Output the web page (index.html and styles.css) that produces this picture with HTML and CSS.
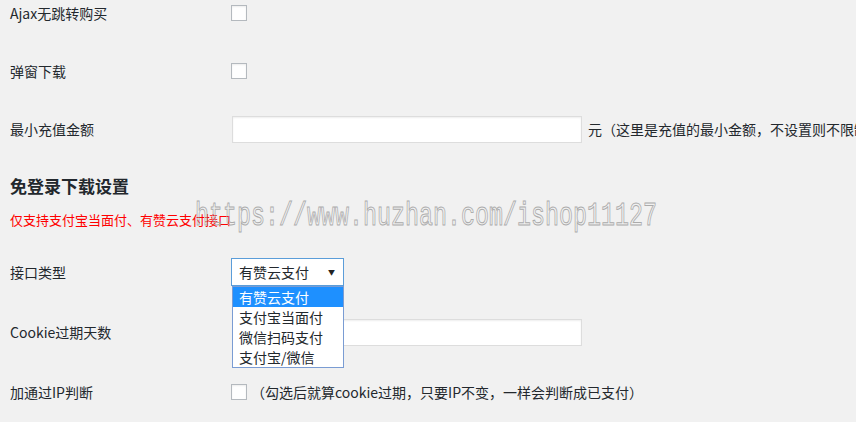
FILE: index.html
```html
<!DOCTYPE html>
<html lang="zh-CN">
<head>
<meta charset="utf-8">
<link rel="stylesheet" href="styles.css">
</head>
<body>
<div class="page">
  <div class="table first">
    <div class="row">
      <div class="label">Ajax无跳转购买</div>
      <div class="field"><span class="checkbox"></span></div>
    </div>
    <div class="row">
      <div class="label">弹窗下载</div>
      <div class="field"><span class="checkbox"></span></div>
    </div>
    <div class="row">
      <div class="label">最小充值金额</div>
      <div class="field"><span class="input"></span><span class="after">元（这里是充值的最小金额，不设置则不限制</span></div>
    </div>
  </div>

  <h2 class="heading">免登录下载设置</h2>
  <p class="notice">仅支持支付宝当面付、有赞云支付接口</p>

  <div class="table second">
    <div class="row">
      <div class="label">接口类型</div>
      <div class="field">
        <div class="select-wrap">
          <div class="select"><span>有赞云支付</span><span class="arrow">▼</span></div>
          <ul class="options">
            <li class="active">有赞云支付</li>
            <li>支付宝当面付</li>
            <li>微信扫码支付</li>
            <li>支付宝/微信</li>
          </ul>
        </div>
      </div>
    </div>
    <div class="row">
      <div class="label">Cookie过期天数</div>
      <div class="field"><span class="input"></span></div>
    </div>
    <div class="row">
      <div class="label">加通过IP判断</div>
      <div class="field"><span class="checkbox"></span><span class="after-cb">（勾选后就算cookie过期，只要IP不变，一样会判断成已支付）</span></div>
    </div>
  </div>

  <div class="watermark">https://www.huzhan.com/ishop11127</div>
</div>
</body>
</html>
```
FILE: styles.css
```css
html, body {
  margin: 0;
  padding: 0;
  background: #f1f1f1;
  overflow: hidden;
}
body {
  width: 856px;
  height: 422px;
  font-family: "Noto Sans CJK SC", "Microsoft YaHei", sans-serif;
  font-size: 14px;
  color: #23282d;
}
.page {
  position: relative;
  padding-left: 10px;
  height: 422px;
}
.table.first {
  margin-top: -16px;
}
.table.first .row {
  height: 58px;
}
.table.second {
  margin-top: 12px;
}
.table.second .row {
  height: 60px;
}
.row {
  display: grid;
  grid-template-columns: 221px 1fr;
  align-items: center;
}
.label {
  line-height: 20px;
  white-space: nowrap;
}
.field {
  display: flex;
  align-items: center;
  white-space: nowrap;
  line-height: 20px;
  overflow: hidden;
}
.checkbox {
  display: inline-block;
  flex: none;
  width: 14px;
  height: 14px;
  border: 1px solid #b4b9be;
  background: #fefefe;
  box-shadow: inset 0 1px 2px rgba(0,0,0,0.07);
}
.input {
  display: inline-block;
  flex: none;
  margin-left: 1px;
  width: 348px;
  height: 25px;
  border: 1px solid #dddddd;
  background: #ffffff;
  box-shadow: inset 0 1px 2px rgba(0,0,0,0.07);
}
.after {
  margin-left: 6px;
}
.after-cb {
  margin-left: 4px;
}
.heading {
  margin: 16px 0 0 0;
  font-size: 17px;
  line-height: 24px;
  font-weight: 700;
  color: #23282d;
}
.notice {
  margin: 12px 0 0 0;
  font-size: 13px;
  line-height: 20px;
  color: #ff0000;
}
.select-wrap {
  position: relative;
}
.field:has(.select-wrap) {
  overflow: visible;
}
.select {
  box-sizing: border-box;
  width: 113px;
  height: 28px;
  border: 1px solid #5b9dd9;
  background: #ffffff;
  display: flex;
  align-items: center;
  justify-content: space-between;
  padding: 0 8px 0 7px;
  font-size: 14px;
}
.arrow {
  font-size: 7px;
  color: #222;
}
.options {
  position: absolute;
  left: 1px;
  top: 28px;
  width: 110px;
  margin: 0;
  padding: 0;
  list-style: none;
  border: 1px solid #7a9cd3;
  background: #ffffff;
  z-index: 2;
}
.options li {
  height: 20px;
  line-height: 20px;
  padding-left: 6px;
  font-size: 14px;
  color: #23282d;
}
.options li.active {
  background: #1e90ff;
  color: #ffffff;
}
.watermark {
  position: absolute;
  left: 195px;
  top: 212px;
  font-family: "Liberation Mono", monospace;
  font-size: 34px;
  line-height: 40px;
  transform: scaleX(0.686);
  transform-origin: left top;
  color: transparent;
  -webkit-text-stroke: 1px #ababab;
  white-space: nowrap;
  pointer-events: none;
  z-index: 3;
}
```
